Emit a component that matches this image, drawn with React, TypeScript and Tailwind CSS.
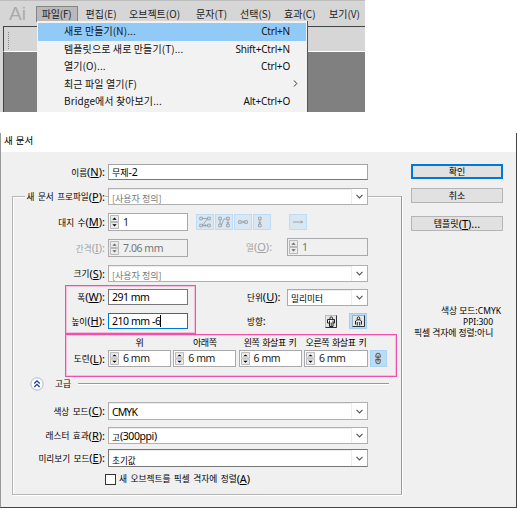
import React from 'react';
import clsx from 'clsx';

const latin = "font-['Noto_Sans','Noto_Sans_CJK_KR',sans-serif]";

const menuTitles = [
  { name: '편집', hotkey: 'E', width: 'w-[43.5px]' },
  { name: '오브젝트', hotkey: 'O', width: 'w-[67px]' },
  { name: '문자', hotkey: 'T', width: 'w-[44px]' },
  { name: '선택', hotkey: 'S', width: 'w-[44px]' },
  { name: '효과', hotkey: 'C', width: 'w-[45px]' },
  { name: '보기', hotkey: 'V', width: 'w-[36px]' },
];

const menuItems = [
  { text: '새로 만들기(N)...', shortcut: 'Ctrl+N', active: true },
  { text: '템플릿으로 새로 만들기(T)...', shortcut: 'Shift+Ctrl+N' },
  { text: '열기(O)...', shortcut: 'Ctrl+O' },
  { text: '최근 파일 열기(F)', submenu: true },
  { text: 'Bridge에서 찾아보기...', shortcut: 'Alt+Ctrl+O' },
];

const AppMenu: React.FC = () => (
  <div className="relative h-[112px] w-[365px] overflow-hidden bg-[#d6d6d6] text-[10px] leading-none text-[#222]">
    <div className="flex h-[26px] items-center border-t border-[#bdbdbd]">
      <span className="w-[36px] pl-[9px] font-['Liberation_Sans',sans-serif] text-[19px] text-[#aaa]">Ai</span>
      <span className="mt-[1px] flex h-[16px] w-[42px] items-center justify-center border border-[#858585] bg-[#b9b9b9] pb-px tracking-[-0.2px]">
        파일(F)
      </span>
      <div className="mt-[1px] flex pl-[8px]">
        {menuTitles.map(m => (
          <span key={m.name} className={clsx('shrink-0 whitespace-nowrap', m.width)}>
            {m.name}({m.hotkey})
          </span>
        ))}
      </div>
    </div>
    <div className="ml-[3px] h-[26px] border-t border-l border-b border-t-[#444] border-l-[#444] border-b-white pt-[5px] pl-[4px]">
      <div className="h-[17px] border-l border-dotted border-[#888]" />
    </div>
    <div className="ml-[3px] h-[60px] border-l border-[#444] bg-[#808080]" />
    <div className="absolute top-[21px] left-[37px] h-[92px] w-[271px] border-r border-[#555] bg-[#f2f2f2] px-[1px] pt-[2px]">
      {menuItems.map(item => (
        <div
          key={item.text}
          className={clsx(
            'flex h-[17.5px] items-center justify-between pr-[16px] pb-px pl-[26px] tracking-[0.1px] text-[#111]',
            item.active && 'bg-[#91c9f7]',
          )}
        >
          <span>{item.text}</span>
          {item.shortcut && <span className={clsx(latin, 'tracking-[-0.2px]')}>{item.shortcut}</span>}
          {item.submenu && (
            <svg className="-mr-[8px]" width="5" height="7" viewBox="0 0 5 7">
              <path d="M1 0.5L3.8 3.5L1 6.5" fill="none" stroke="#333" />
            </svg>
          )}
        </div>
      ))}
    </div>
  </div>
);

interface CaptionProps {
  text: string;
  hotkey?: string;
  muted?: boolean;
}

const Caption: React.FC<CaptionProps> = ({ text, hotkey, muted }) => (
  <span className={clsx('inline-flex items-center whitespace-nowrap leading-none', muted ? 'text-[#a3a3a3]' : 'text-black')}>
    <span className="text-[8.6px] [word-spacing:1.5px]">{text}</span>
    <span className={clsx(latin, '-mt-px text-[11px]')}>
      {hotkey && <>(<span className="underline underline-offset-1">{hotkey}</span>)</>}:
    </span>
  </span>
);

interface RowProps extends CaptionProps {
  className: string;
  children: React.ReactNode;
}

const Row: React.FC<RowProps> = ({ className, children, ...caption }) => (
  <div className={clsx('flex items-center', className)}>
    <div className="mr-[3px] flex w-[92px] shrink-0 justify-end">
      <Caption {...caption} />
    </div>
    {children}
  </div>
);

const Combo: React.FC<{ className: string; children: React.ReactNode }> = ({ className, children }) => (
  <div className={clsx('flex items-center border bg-white', className)}>
    <span className="flex h-full flex-1 items-center border-t border-r border-[#ececec] pl-[3px] leading-none whitespace-nowrap">{children}</span>
    <svg className="mx-[4px]" width="7" height="5" viewBox="0 0 7 5">
      <path d="M0.5 0.8L3.5 3.8L6.5 0.8" fill="none" stroke="#555" strokeWidth="1.2" />
    </svg>
  </div>
);

interface StepperProps {
  className: string;
  value: string;
  muted?: boolean;
}

const Stepper: React.FC<StepperProps> = ({ className, value, muted }) => (
  <div className={clsx('flex items-center border border-[#a9a9ad] p-px', muted ? 'bg-[#f0f0f0] text-[#777]' : 'bg-white text-[#222]', className)}>
    <svg className="h-full w-[9px] shrink-0" viewBox="0 0 9 15" preserveAspectRatio="none">
      <path d="M0.5 0.5H8.5V7H0.5ZM0.5 8H8.5V14.5H0.5Z" fill="#ececec" stroke="#b5b5b5" />
      <path d="M2.3 5L4.5 2.8L6.7 5ZM2.3 10L4.5 12.3L6.7 10Z" fill={muted ? '#666' : '#000'} />
    </svg>
    <span className={clsx(latin, 'pl-[4px] text-[10.5px] leading-none tracking-[-0.45px] whitespace-nowrap')}>{value}</span>
  </div>
);

const gridIcons = [
  'M3 2.5H6V5.5H3ZM12 2.5H15V5.5H12ZM3 10.5H6V13.5H3ZM12 10.5H15V13.5H12ZM6 4H12L6 12H12M8.5 10.5L10.5 12L8.5 13.5',
  'M3 2.5H6V5.5H3ZM12 2.5H15V5.5H12ZM3 10.5H6V13.5H3ZM12 10.5H15V13.5H12ZM4.5 5.5V10.5M6 11.5L9 4.5H12M13.5 5.5V10.5M12 8L13.5 10L15 8',
  'M4 6.5H7V9.5H4ZM11 6.5H14V9.5H11ZM7 8H11M8.5 6.5L10 8L8.5 9.5',
  'M5 2.5H8V5.5H5ZM5 10.5H8V13.5H5ZM6.5 5.5V10.5M5 8L6.5 10L8 8',
];

const GridIcon: React.FC<{ path: string; className?: string }> = ({ path, className }) => (
  <svg className={clsx('border border-[#bddcf5] bg-[#d9e7f2]', className)} width="18" height="16" viewBox="1 0 16 16">
    <path d={path} fill="none" stroke="#979da3" />
  </svg>
);

const PortraitIcon: React.FC = () => (
  <svg width="12" height="13" viewBox="0 0 12 13">
    <rect x="0.5" y="0.5" width="11" height="12" fill="#e4e4e4" stroke="#bbb" />
    <path d="M0.5 12.5H11.5V0.5" fill="none" stroke="#333" />
    <path d="M2.5 8V4.5H9.5V8H8V11.5H4.5V8Z" fill="#fff" stroke="#222" />
    <path d="M4.5 5.5V8M6.2 7.5V11.5M8 5.5V8" stroke="#222" />
    <circle cx="6.2" cy="3.2" r="1.3" fill="#fff" stroke="#222" />
  </svg>
);

const LandscapeIcon: React.FC = () => (
  <svg width="13" height="12" viewBox="0 0 13 12">
    <rect x="0.5" y="0.5" width="12" height="11" fill="#e2e8ee" stroke="#9fb3c4" />
    <path d="M0.5 11.5H12.5V0.5" fill="none" stroke="#333" />
    <path d="M3.5 9.5V6L5 4.8H8L9.5 6V9.5M5.3 10.5V7M7.7 10.5V7" fill="none" stroke="#222" />
    <circle cx="6.5" cy="3.2" r="1.3" fill="#fff" stroke="#222" />
  </svg>
);

const bleeds = [
  { name: '위', width: 'w-[63px]' },
  { name: '아래쪽', width: 'w-[63px]' },
  { name: '왼쪽 화살표 키', width: 'w-[63px]' },
  { name: '오른쪽 화살표 키', width: 'w-[64px]' },
];

const PushButton: React.FC<{ className: string; children: React.ReactNode }> = ({ className, children }) => (
  <button className={clsx('flex h-[15px] w-[92px] items-center justify-center bg-[#e1e1e1] text-[9px] leading-none text-black', className)}>
    {children}
  </button>
);

const NewDocument: React.FC = () => (
  <div className="relative mt-[21px] h-[375px] w-[517px] border-r border-b border-l border-r-[#444] border-b-[#444] border-l-[#999] bg-[#f0f0f0] text-black">
    <div className="h-[19px] bg-white pt-[3px] pl-[3px] text-[9.5px] leading-none [word-spacing:1px]">새 문서</div>
    <div className="flex">
      <div className="w-[410px]">
        <Row className="mt-[12px] ml-[12px] h-[16px]" text="이름" hotkey="N">
          <div className="flex h-[16px] w-[260px] items-center border border-[#a5a5a5] border-b-[#777] bg-white pl-[3px] text-[9px] leading-none">
            무제<span className={clsx(latin, 'text-[10.5px] tracking-[-0.3px]')}>-2</span>
          </div>
        </Row>
        <div className="mt-[16px] ml-[11px] h-[299px] w-[390px] border border-[#b5b5b5] border-r-[#999] shadow-[inset_1px_1px_0_white,1px_1px_0_white]">
          <div className="-mt-[9px] flex h-[17px] items-center">
            <div className="mr-[3px] flex w-[92px] justify-end">
              <span className="flex bg-[#f0f0f0] pl-[2px]"><Caption text="새 문서 프로파일" hotkey="P" /></span>
            </div>
            <Combo className="h-[17px] w-[260px] border-[#b0b0b0] text-[9px] text-[#777]">
              <span className="pt-[2px]">[사용자 정의]</span>
            </Combo>
          </div>
          <Row className="mt-[8px] h-[18px]" text="대지 수" hotkey="M">
            <Stepper className="h-[18px] w-[80px]" value="1" />
            <div className="ml-[8px] flex gap-[1px]">
              {gridIcons.map(path => <GridIcon key={path} path={path} />)}
            </div>
            <GridIcon className="ml-[18px]" path="M3 8H14.5M12 6.5L14 8L12 9.5" />
          </Row>
          <Row className="mt-[8px] h-[18px]" text="간격" hotkey="I" muted>
            <Stepper className="h-[18px] w-[80px]" value="7.06 mm" muted />
            <div className="-mt-[2px] mr-[16px] ml-[58px] flex w-[25px]"><Caption text="열" hotkey="O" muted /></div>
            <Stepper className="-mt-[2px] h-[18px] w-[81px]" value="1" muted />
          </Row>
          <Row className="mt-[8px] h-[17px]" text="크기" hotkey="S">
            <Combo className="h-[17px] w-[260px] border-[#b0b0b0] text-[9px] text-[#777]">
              <span className="pt-[2px]">[사용자 정의]</span>
            </Combo>
          </Row>
          <Row className="mt-[7px] h-[16px]" text="폭" hotkey="W">
            <div className={clsx(latin, 'flex h-[16px] w-[80px] items-center border border-[#777] bg-white pl-[3px] text-[10.5px] leading-none tracking-[-0.5px]')}>
              291 mm
            </div>
            <div className="ml-[59px] flex w-[40px]"><Caption text="단위" hotkey="U" /></div>
            <Combo className="h-[17px] w-[81px] border-[#aaa] text-[8.7px]"><span className="pt-[4px]">밀리미터</span></Combo>
          </Row>
          <Row className="mt-[8px] h-[16px]" text="높이" hotkey="H">
            <div className={clsx(latin, 'flex h-[16px] w-[80px] items-center border border-[#0078d7] bg-white pl-[3px] text-[10.5px] leading-none tracking-[-0.45px]')}>
              210 mm -6<span className="h-[12px] w-px bg-black" />
            </div>
            <div className="ml-[59px] flex w-[78px]"><Caption text="방향" /></div>
            <PortraitIcon />
            <div className="ml-[12px] flex h-[16px] w-[18px] items-center justify-center border border-[#9fd0f7] bg-[#bcdcf4]">
              <LandscapeIcon />
            </div>
          </Row>
          <div className="mt-[8px] ml-[95px] flex h-[11px] items-center gap-[2.3px] text-[9px] leading-none whitespace-nowrap">
            {bleeds.map(b => (
              <span key={b.name} className={clsx('flex justify-center tracking-[-0.35px] [word-spacing:1px]', b.width)}>{b.name}</span>
            ))}
          </div>
          <Row className="mt-[2px] h-[17px]" text="도련" hotkey="L">
            <div className="flex gap-[2.3px]">
              {bleeds.map(b => <Stepper key={b.name} className={clsx('h-[17px]', b.width)} value="6 mm" />)}
            </div>
            <svg className="ml-[2px] border border-[#a8d4f5] bg-[#bcdcf4]" width="17" height="17" viewBox="0 0 17 17">
              <path d="M5.5 7V5Q5.5 2.5 8 2.5T10.5 5V7ZM5.5 9.5V12Q5.5 14.5 8 14.5T10.5 12V9.5ZM8 5V12" fill="#ccc" stroke="#444" />
            </svg>
          </Row>
          <div className="mt-[10px] ml-[17px] flex h-[14px] items-center">
            <svg width="14" height="14" viewBox="0 0 14 14">
              <circle cx="7" cy="7" r="6.2" fill="#fff" stroke="#a9b4d8" />
              <path d="M4.3 6.5L7 3.9L9.7 6.5M4.3 10L7 7.4L9.7 10" fill="none" stroke="#18399b" strokeWidth="1.3" />
            </svg>
            <span className="w-[34px] pl-[11px] text-[8.7px] leading-none whitespace-nowrap">고급</span>
            <div className="h-[2px] w-[311px] border-t border-b border-t-[#999] border-b-white" />
          </div>
          <Row className="mt-[11px] h-[18px]" text="색상 모드" hotkey="C">
            <Combo className="h-[18px] w-[260px] border-[#b0b0b0]">
              <span className={clsx(latin, 'pt-px text-[10.5px] tracking-[-0.9px]')}>CMYK</span>
            </Combo>
          </Row>
          <Row className="mt-[7px] h-[17px]" text="래스터 효과" hotkey="R">
            <Combo className="h-[17px] w-[260px] border-[#b0b0b0] text-[8.6px]">
              <span className="pt-[2px]">고</span>
              <span className={clsx(latin, 'text-[10.5px] tracking-[-0.4px]')}>(300ppi)</span>
            </Combo>
          </Row>
          <Row className="mt-[5px] h-[18px]" text="미리보기 모드" hotkey="E">
            <Combo className="h-[18px] w-[260px] border-[#777] border-r-[#aaa] text-[8.6px]"><span className="pt-[4px]">초기값</span></Combo>
          </Row>
          <div className="mt-[6px] ml-[92px] flex h-[12px] items-center">
            <span className="h-[11px] w-[11px] border border-[#333] bg-white" />
            <span className="ml-[3px] flex items-center text-[8.7px] leading-none whitespace-nowrap [word-spacing:1.5px]">
              새 오브젝트를 픽셀 격자에 정렬
              <span className={clsx(latin, '-mt-px text-[11px] tracking-[-0.2px]')}>(<u className="underline-offset-1">A</u>)</span>
            </span>
          </div>
        </div>
      </div>
      <div className="pt-[12px]">
        <PushButton className="border-2 border-[#0078d7]">확인</PushButton>
        <PushButton className="mt-[9px] border border-[#b5b5b5]">취소</PushButton>
        <PushButton className="mt-[13px] border border-[#b5b5b5]">
          템플릿<span className={clsx(latin, '-mt-px text-[11px]')}>(<u className="underline-offset-1">T</u>)...</span>
        </PushButton>
        <div className="mt-[74px] w-[92px] text-[8.8px] leading-[11px] whitespace-nowrap">
          <div className="pl-[30px]">색상 모드:<span className={clsx(latin, 'text-[8.5px]')}>CMYK</span></div>
          <div className={clsx(latin, 'pl-[52px] text-[8.5px]')}>PPI:300</div>
          <div className="pl-[3px]">픽셀 격자에 정렬:아니</div>
        </div>
      </div>
    </div>
    {/* highlight frames over the size and bleed fields */}
    <div className="absolute top-[152px] left-[64px] h-[49px] w-[131px] border border-[#ee50ac] shadow-[inset_0_0_0_1px_#f7bfdf]" />
    <div className="absolute top-[201px] left-[64px] h-[43px] w-[332px] border border-[#ee50ac] shadow-[inset_0_0_0_1px_#f7bfdf]" />
  </div>
);

const App: React.FC = () => (
  <div className="h-[508px] w-[517px] overflow-hidden bg-white font-['Noto_Sans_CJK_KR',sans-serif]">
    <AppMenu />
    <NewDocument />
  </div>
);

export default App;
